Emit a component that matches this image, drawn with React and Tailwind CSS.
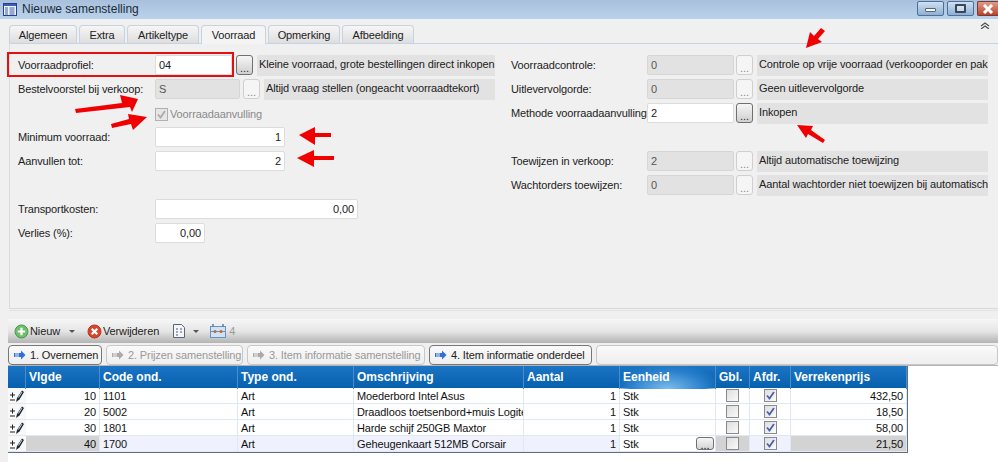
import React from "react";

const Dots = ({ on }) => (
  <div className={on
    ? "w-[17px] h-[20px] shrink-0 rounded-[3px] border border-[#707070] bg-gradient-to-b from-[#f6f6f6] to-[#cfcfcf] text-[#333] text-[11px] leading-[24px] text-center"
    : "w-[17px] h-[20px] shrink-0 rounded-[3px] border border-[#cfcfcf] bg-[#f5f5f5] text-[#888] text-[11px] leading-[24px] text-center"}>...</div>
);

const Field = ({ w, v, on, right }) => (
  <div className={`${w} h-[20px] shrink-0 border rounded-[2px] px-[3px] leading-[18px] ${on ? "bg-white text-[#222] border-[#dcdcdc]" : "bg-[#e2e2e2] border-[#f6f6f6] outline outline-1 outline-[#d6d6d6] -outline-offset-1 text-[#555]"} ${right ? "text-right" : ""}`}>{v}</div>
);

const Desc = ({ w, t }) => (
  <div className={`${w} h-[21px] shrink-0 bg-[#e2e2e2] px-[2px] leading-[18px] text-[#222] whitespace-nowrap overflow-hidden`}>{t}</div>
);

const Row = ({ children }) => <div className="h-[24px] flex items-start">{children}</div>;
const LabelL = ({ t }) => <div className="w-[137px] shrink-0 leading-[20px] text-[#222] whitespace-nowrap">{t}</div>;
const LabelR = ({ t }) => <div className="w-[136px] shrink-0 leading-[20px] text-[#222] whitespace-nowrap">{t}</div>;

const tabs = [
  ["Algemeen", "w-[68px]"],
  ["Extra", "w-[46px]"],
  ["Artikeltype", "w-[72px]"],
  ["Voorraad", "w-[65px]"],
  ["Opmerking", "w-[72px]"],
  ["Afbeelding", "w-[72px]"],
];

const Arrow = ({ on }) => (
  <svg width="12" height="10" viewBox="0 0 12 10" className="shrink-0">
    <path d="M0 3h1.500v4H0zM2.500 3h1v4h-1zM4.500 3H7V.5L11.500 5 7 9.500V7H4.500z" fill={on ? "#2f6fe0" : "#aaaaaa"} />
  </svg>
);

const Step = ({ w, t, on }) => (
  <div className={`${w} h-[20px] shrink-0 flex items-center gap-[4px] pl-[5px] rounded-[4px] border whitespace-nowrap bg-gradient-to-b from-[#fafafa] to-[#eeeeee] ${on ? "border-[#777] text-[#222]" : "border-[#c8c8c8] text-[#999]"}`}>
    <Arrow on={on} />
    <span>{t}</span>
  </div>
);

const cols = "grid grid-cols-[18px_74px_138px_116px_170px_96px_96px_34px_41px_116px]";

const Check = ({ on }) => (
  <div className="w-[13px] h-[13px] border border-[#8a8a8a] bg-gradient-to-br from-[#dedede] to-[#fbfbfb] flex items-center justify-center">
    {on && (
      <svg width="9" height="9" viewBox="0 0 9 9">
        <path d="M1 4.500 3.500 7.500 8 1" fill="none" stroke="#4a63a8" strokeWidth="1.800" />
      </svg>
    )}
  </div>
);

const Indicator = () => (
  <div className="h-[16px] border-b border-[#dfe9f5] flex items-center bg-[#f8f8f8]">
    <svg width="16" height="14" viewBox="0 0 16 14" className="ml-[1px]">
      <path d="M1 6h5M3.500 3.500v5M1 11h5" stroke="#222" strokeWidth="1" fill="none" />
      <path d="M7 13 8 9 13 1.500 15 3 10.500 10.500z" fill="#1c2a3a" />
      <path d="M9.500 8.500 13 3" stroke="#ffffff" strokeWidth="0.800" />
    </svg>
  </div>
);

const rows = [
  ["10", "1101", "Moederbord Intel Asus", "432,50"],
  ["20", "5002", "Draadloos toetsenbord+muis Logitech", "18,50"],
  ["30", "1801", "Harde schijf 250GB Maxtor", "58,00"],
  ["40", "1700", "Geheugenkaart 512MB Corsair", "21,50"],
];

const headers = ["", "Vlgde", "Code ond.", "Type ond.", "Omschrijving", "Aantal", "Eenheid", "Gbl.", "Afdr.", "Verrekenprijs"];

const Cell = ({ bg, right, children, center }) => (
  <div className={`h-[16px] border-b border-r border-[#dfe9f5] px-[3px] leading-[16px] text-[#111] whitespace-nowrap overflow-hidden ${bg} ${right ? "text-right" : ""} ${center ? "flex items-center justify-center" : ""}`}>{children}</div>
);

export default function App() {
  return (
    <div className="relative w-[998px] h-[462px] overflow-hidden bg-[#f0f0f0] text-[11px] tracking-[-0.12px] font-['Liberation_Sans',Arial,sans-serif]">
      {/* title bar */}
      <div className="h-[19px] flex items-start bg-gradient-to-b from-[#a8c0dc] to-[#bad3ec]">
        <svg width="14" height="13" viewBox="0 0 14 13" className="ml-[3px] mt-[3px]">
          <rect x="0.500" y="0.500" width="13" height="12" fill="#eef3fb" stroke="#27408b" />
          <rect x="1" y="1" width="12" height="2" fill="#3c5fb5" />
          <path d="M2 5h3M2 7h3M2 9h3M2 11h3M6.500 5h5M6.500 7h5M6.500 9h5M6.500 11h5" stroke="#3c5fb5" strokeWidth="1" />
        </svg>
        <div className="ml-[5px] text-[12px] tracking-normal leading-[18px] text-[#1c2a3a] whitespace-nowrap">Nieuwe samenstelling</div>
        <div className="ml-auto flex gap-[3px]">
          <div className="w-[27px] h-[15px] mt-[1px] rounded-[2px] border border-[#4f6f96] bg-gradient-to-b from-[#cfe0f2] to-[#8fb0d2] flex items-center justify-center">
            <div className="w-[11px] h-[4px] mt-[3px] bg-white border border-[#53657c] rounded-[1px]" />
          </div>
          <div className="w-[27px] h-[15px] mt-[1px] rounded-[2px] border border-[#4f6f96] bg-gradient-to-b from-[#cfe0f2] to-[#8fb0d2] flex items-center justify-center">
            <div className="w-[11px] h-[9px] bg-white/40 border-2 border-[#36475e] rounded-[1px]" />
          </div>
          <div className="w-[21px] h-[15px] mt-[1px] rounded-l-[2px] border border-r-0 border-[#7a3a30] bg-gradient-to-b from-[#e09a88] to-[#b8432c] flex items-center justify-center">
            <svg width="12" height="10" viewBox="0 0 12 10">
              <path d="M2 1 10 9M10 1 2 9" stroke="#ffffff" strokeWidth="3" />
            </svg>
          </div>
        </div>
      </div>

      {/* tabs */}
      <div className="relative h-[24px] pt-[6px] pl-[9px] flex gap-[2px]">
        {tabs.map(([t, w]) => t === "Voorraad" ? (
          <div key={t} className={`${w} h-[19px] shrink-0 relative z-10 border border-b-0 border-[#c6d3e2] rounded-t-[4px] bg-[#f4f4f4] text-center leading-[18px] text-[#222]`}>{t}</div>
        ) : (
          <div key={t} className={`${w} h-[18px] shrink-0 border border-b-0 border-[#c6d3e2] rounded-t-[4px] bg-gradient-to-b from-[#f6f6f6] to-[#dedede] text-center leading-[18px] text-[#222]`}>{t}</div>
        ))}
        <svg width="10" height="7" viewBox="0 0 10 7" className="absolute right-[8px] top-[3px]">
          <path d="M1 4 5 1 9 4M1 7 5 4 9 7" fill="none" stroke="#555" strokeWidth="1.300" />
        </svg>
      </div>

      {/* panel */}
      <div className="ml-[9px] h-[266px] border-t border-l border-b border-t-[#c6d3e2] border-l-[#dcdcdc] border-b-[#d6dbd6] pt-[11px] pl-[8px] flex">
        <div className="w-[493px] shrink-0">
          <Row>
            <LabelL t="Voorraadprofiel:" />
            <Field w="w-[77px]" v="04" on />
            <div className="w-[4px]" />
            <Dots on />
            <div className="w-[4px]" />
            <Desc w="w-[238px]" t="Kleine voorraad, grote bestellingen direct inkopen" />
          </Row>
          <Row>
            <LabelL t="Bestelvoorstel bij verkoop:" />
            <Field w="w-[85px]" v="S" />
            <div className="w-[3px]" />
            <Dots />
            <div className="w-[4px]" />
            <Desc w="w-[231px]" t="Altijd vraag stellen (ongeacht voorraadtekort)" />
          </Row>
          <Row>
            <div className="w-[137px] shrink-0" />
            <div className="flex items-center h-[20px] mt-px text-[#8a8a8a]">
              <div className="w-[13px] h-[13px] border border-[#b0b0b0] bg-[#e6e6e6] flex items-center justify-center">
                <svg width="9" height="9" viewBox="0 0 9 9">
                  <path d="M1 4.500 3.500 7.500 8 1" fill="none" stroke="#aaaaaa" strokeWidth="1.800" />
                </svg>
              </div>
              <span className="ml-[2px]">Voorraadaanvulling</span>
            </div>
          </Row>
          <Row>
            <LabelL t="Minimum voorraad:" />
            <Field w="w-[130px]" v="1" on right />
          </Row>
          <Row>
            <LabelL t="Aanvullen tot:" />
            <Field w="w-[130px]" v="2" on right />
          </Row>
          <Row />
          <Row>
            <LabelL t="Transportkosten:" />
            <Field w="w-[203px]" v="0,00" on right />
          </Row>
          <Row>
            <LabelL t="Verlies (%):" />
            <Field w="w-[50px]" v="0,00" on right />
          </Row>
        </div>
        <div className="flex-1">
          <Row>
            <LabelR t="Voorraadcontrole:" />
            <Field w="w-[87px]" v="0" />
            <div className="w-[2px]" />
            <Dots />
            <div className="w-[4px]" />
            <Desc w="w-[231px]" t="Controle op vrije voorraad (verkooporder en pak" />
          </Row>
          <Row>
            <LabelR t="Uitlevervolgorde:" />
            <Field w="w-[87px]" v="0" />
            <div className="w-[2px]" />
            <Dots />
            <div className="w-[4px]" />
            <Desc w="w-[231px]" t="Geen uitlevervolgorde" />
          </Row>
          <Row>
            <LabelR t="Methode voorraadaanvulling" />
            <Field w="w-[87px]" v="2" on />
            <div className="w-[2px]" />
            <Dots on />
            <div className="w-[4px]" />
            <Desc w="w-[231px]" t="Inkopen" />
          </Row>
          <Row />
          <Row>
            <LabelR t="Toewijzen in verkoop:" />
            <Field w="w-[87px]" v="2" />
            <div className="w-[2px]" />
            <Dots />
            <div className="w-[4px]" />
            <Desc w="w-[231px]" t="Altijd automatische toewijzing" />
          </Row>
          <Row>
            <LabelR t="Wachtorders toewijzen:" />
            <Field w="w-[87px]" v="0" />
            <div className="w-[2px]" />
            <Dots />
            <div className="w-[4px]" />
            <Desc w="w-[231px]" t="Aantal wachtorder niet toewijzen bij automatisch" />
          </Row>
        </div>
      </div>

      {/* splitter */}
      <div className="ml-[9px] h-[9px] mt-[1px] border-t border-[#e2e2e2]" />

      {/* toolbar */}
      <div className="ml-[8px] h-[24px] flex items-center pl-[6px] text-[#222] bg-gradient-to-b from-[#f6f6f6] via-[#e6e6e6] to-[#b4b4b4]">
        <svg width="15" height="15" viewBox="0 0 15 15">
          <circle cx="7.500" cy="7.500" r="6.500" fill="#6fbf6a" stroke="#4d9650" />
          <path d="M7.500 3.800v7.400M3.800 7.500h7.400" stroke="#ffffff" strokeWidth="2.200" />
        </svg>
        <span className="ml-[1px]">Nieuw</span>
        <svg width="6" height="3" viewBox="0 0 6 3" className="ml-[9px]"><path d="M0 0h6L3 3z" fill="#555" /></svg>
        <svg width="15" height="15" viewBox="0 0 15 15" className="ml-[12px]">
          <circle cx="7.500" cy="7.500" r="6.500" fill="#d9452a" stroke="#b5371f" />
          <path d="M4.700 4.700l5.600 5.600M10.300 4.700l-5.600 5.600" stroke="#ffffff" strokeWidth="2.200" />
        </svg>
        <span className="ml-[1px]">Verwijderen</span>
        <svg width="12" height="14" viewBox="0 0 12 14" className="ml-[14px]">
          <path d="M.5.500h8l3 3v10H.500z" fill="#f6f6f6" stroke="#55677f" />
          <path d="M3 5h2M7 5h2M3 8h2M7 8h2M3 11h2" stroke="#3a5d8a" />
        </svg>
        <svg width="6" height="3" viewBox="0 0 6 3" className="ml-[8px]"><path d="M0 0h6L3 3z" fill="#555" /></svg>
        <svg width="16" height="14" viewBox="0 0 16 14" className="ml-[11px]">
          <rect x="0.500" y="2.500" width="15" height="11" fill="#cfe2f5" stroke="#6a93c0" />
          <path d="M0.500 7.500h15" stroke="#6a93c0" />
          <path d="M3 0v3M13 0v3" stroke="#5a7da5" strokeWidth="1.500" />
          <circle cx="5" cy="7.500" r="1.500" fill="#c06a1e" />
          <circle cx="11" cy="7.500" r="1.500" fill="#c06a1e" />
        </svg>
        <span className="ml-[3px] text-[#999]">4</span>
      </div>

      {/* step buttons */}
      <div className="ml-[8px] h-[23px] pt-[2px] flex gap-[4px] border-b border-[#b5b5b5]">
        <Step w="w-[94px]" t="1. Overnemen" on />
        <Step w="w-[137px]" t="2. Prijzen samenstelling" />
        <Step w="w-[178px]" t="3. Item informatie samenstelling" />
        <Step w="w-[163px]" t="4. Item informatie onderdeel" on />
        <div className="flex-1 h-[20px] rounded-[4px] border border-[#c8c8c8] bg-gradient-to-b from-[#fafafa] to-[#eeeeee]" />
      </div>

      {/* grid area */}
      <div className="ml-[8px] h-[97px] bg-white">
        <div className="w-[900px] border-b border-r border-[#5f6f80]">
          <div className={`${cols} h-[22px] bg-gradient-to-b from-[#1b75c4] to-[#0560ae]`}>
            {headers.map((h, i) => (
              <div key={i} className={`relative px-[3px] leading-[23px] font-bold text-white text-[12px] tracking-normal border-r border-[#4c8cc8] whitespace-nowrap ${h === "Eenheid" ? "bg-[radial-gradient(ellipse_at_50%_100%,#7cbcec_0%,#2a80cc_55%,transparent_80%)]" : ""}`}>{h}</div>
            ))}
          </div>
          {rows.map((r, i) => {
            const last = i === 3;
            const base = last ? "bg-[#eff1fd]" : "bg-white";
            return (
              <div key={r[0]} className={cols}>
                <Indicator />
                <Cell bg={last ? "bg-[#d3d3d3]" : "bg-white"} right>{r[0]}</Cell>
                <Cell bg={base}>{r[1]}</Cell>
                <Cell bg={base}>Art</Cell>
                <Cell bg={base}>{r[2]}</Cell>
                <Cell bg={base} right>1</Cell>
                <div className="h-[16px] border-b border-r border-[#dfe9f5] bg-white pl-[3px] pr-[1px] leading-[16px] text-[#111] flex items-center justify-between">
                  <span>Stk</span>
                  {last && <div className="w-[18px] h-[13px] rounded-[3px] border border-[#707070] bg-gradient-to-b from-[#f6f6f6] to-[#d4d4d4] text-[11px] leading-[14px] text-center">...</div>}
                </div>
                <Cell bg={last ? "bg-[#d3d3d3]" : "bg-white"} center><Check /></Cell>
                <Cell bg={base} center><Check on /></Cell>
                <Cell bg={last ? "bg-[#d3d3d3]" : "bg-white"} right>{r[3]}</Cell>
              </div>
            );
          })}
        </div>
      </div>

      {/* highlight frame and arrows drawn on top of the screenshot */}
      <div className="absolute left-[7px] top-[52px] w-[227px] h-[25px] border-2 border-[#e60f0f]" />
      <svg width="998" height="462" viewBox="0 0 998 462" className="absolute left-0 top-0 pointer-events-none">
        <g fill="#f00000" stroke="none">
          <path d="M75 109 122 103 120 95 138 99 132 112 130 107 76 113z" />
          <path d="M111 124 129 119 128 114 147 117 133 130 131 124 112 128z" />
          <path d="M299 135 315 127V133H331V137H315V145z" />
          <path d="M297 158 314 150V156H334V160H314V167z" />
          <path d="M806 48 810 32 814 36 821 28 825 31 818 39 822 42z" />
          <path d="M797 125 813 126 811 130 825 140 823 143 808 134 806 138z" />
        </g>
      </svg>
    </div>
  );
}
